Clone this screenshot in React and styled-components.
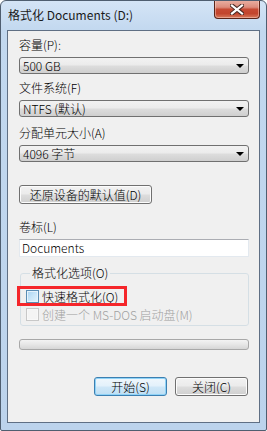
import styled, { createGlobalStyle } from "styled-components";

const GlobalStyle = createGlobalStyle`
	html, body {
		margin: 0;
		padding: 0;
		background: #ffffff;
	}
	body {
		font-family: "Noto Sans CJK SC", "Noto Sans", sans-serif;
		font-size: 12px;
		font-weight: 300;
		color: #000;
	}
`

const combos = [
	{ label: "容量(P):", value: "500 GB", gap: 7 },
	{ label: "文件系统(F)", value: "NTFS (默认)", gap: 7 },
	{ label: "分配单元大小(A)", value: "4096 字节", gap: 9 },
];

const CloseGlyph = () => (
	<svg width="14" height="11" viewBox="0 0 14 11">
		<path d="M2 1.5 L12 9.5 M12 1.5 L2 9.5" stroke="#4a2a24" strokeWidth="4.2" strokeLinecap="square" />
		<path d="M2 1.5 L12 9.5 M12 1.5 L2 9.5" stroke="#ffffff" strokeWidth="2.2" strokeLinecap="square" />
	</svg>
)

const App = () => {
	return (
		<>
			<GlobalStyle />
			<Window>
				<TitleBar>
					<Title>格式化 Documents (D:)</Title>
					<CloseButton><CloseGlyph /></CloseButton>
				</TitleBar>
				<Client>
					{combos.map((c) => (
						<Field key={c.label} $gap={c.gap}>
							<Label>{c.label}</Label>
							<Combo>
								<span>{c.value}</span>
								<Arrow />
							</Combo>
						</Field>
					))}

					<PushButton $width={133} $top={23}>还原设备的默认值(D)</PushButton>

					<Field $gap={16}>
						<Label>卷标(L)</Label>
						<TextInput>Documents</TextInput>
					</Field>

					<Group>
						<Legend>格式化选项(O)</Legend>
						<CheckRow>
							<CheckBox $hot />
							<span>快速格式化(Q)</span>
							<Highlight />
						</CheckRow>
						<CheckRow $disabled>
							<CheckBox $disabled />
							<span>创建一个 MS-DOS 启动盘(M)</span>
						</CheckRow>
					</Group>

					<Progress />

					<ButtonRow>
						<PushButton $width={73} $default>开始(S)</PushButton>
						<PushButton $width={73}>关闭(C)</PushButton>
					</ButtonRow>
				</Client>
			</Window>
		</>
	)
}

const Window = styled.div`
	width: 267px;
	height: 431px;
	box-sizing: border-box;
	display: flex;
	flex-direction: column;
	border: 1px solid #4f5e70;
	border-radius: 6px 6px 2px 2px;
	background: linear-gradient(180deg, #d4e4f6 0px, #c2d8ef 30px, #bcd3ec 100%);
	overflow: hidden;
`

const TitleBar = styled.div`
	height: 29px;
	display: flex;
	justify-content: space-between;
	align-items: flex-start;
	padding: 0 6px 0 7px;
	flex-shrink: 0;
`

const Title = styled.div`
	margin-top: 6px;
	font-size: 12px;
	font-weight: 400;
	line-height: 16px;
	color: #1a1a1a;
`

const CloseButton = styled.div`
	width: 46px;
	height: 19px;
	box-sizing: border-box;
	margin-top: -1px;
	display: flex;
	align-items: center;
	justify-content: center;
	border: 1px solid #5a2418;
	border-top: none;
	border-radius: 0 0 4px 4px;
	background: linear-gradient(180deg, #eab2a4 0%, #dc8c7c 40%, #c64a33 52%, #c2452d 75%, #d77a5c 100%);
	box-shadow: inset 0 0 0 1px rgba(255, 220, 210, 0.45);
`

const Client = styled.div`
	flex: 1;
	margin: 0 6px 7px 6px;
	border: 1px solid #5f6f84;
	background: #f0f0f0;
	padding: 0 10px 0 11px;
	display: flex;
	flex-direction: column;
`

const Field = styled.div`
	display: flex;
	flex-direction: column;
	margin-top: ${p => p.$gap}px;
`

const Label = styled.div`
	line-height: 14px;
	height: 14px;
	margin-bottom: 5px;
	white-space: nowrap;
`

const Combo = styled.div`
	height: 17px;
	box-sizing: border-box;
	border: 1px solid #707070;
	border-radius: 3px;
	background: linear-gradient(180deg, #f2f2f2 0%, #ebebeb 48%, #dddddd 52%, #cfcfcf 100%);
	display: flex;
	align-items: center;
	justify-content: space-between;
	padding: 0 4px 0 3px;
	line-height: 14px;
	white-space: nowrap;
`

const Arrow = styled.div`
	width: 0;
	height: 0;
	border-left: 4px solid transparent;
	border-right: 4px solid transparent;
	border-top: 4px solid #000;
	margin-top: 1px;
`

const PushButton = styled.div`
	width: ${p => p.$width}px;
	height: 19px;
	box-sizing: border-box;
	margin-top: ${p => p.$top || 0}px;
	border: 1px solid ${p => p.$default ? "#3c7fb1" : "#707070"};
	border-radius: 3px;
	background: ${p => p.$default
		? "linear-gradient(180deg, #f0f7fc 0%, #e3f1fb 48%, #cfe7f7 52%, #bfdff4 100%)"
		: "linear-gradient(180deg, #f2f2f2 0%, #ebebeb 48%, #dddddd 52%, #cfcfcf 100%)"};
	box-shadow: ${p => p.$default ? "inset 0 0 0 1px #8fd3f7" : "inset 0 0 0 1px #fcfcfc"};
	display: flex;
	align-items: center;
	justify-content: center;
	line-height: 14px;
	white-space: nowrap;
`

const TextInput = styled.div`
	height: 18px;
	box-sizing: border-box;
	background: #fff;
	border: 1px solid #e3e9ef;
	border-top-color: #abadb3;
	display: flex;
	align-items: center;
	padding-left: 2px;
	line-height: 14px;
`

const Group = styled.fieldset`
	margin: 9px 0 0 1px;
	padding: 0 0 2px 5px;
	border: 1px solid #d5dfe5;
	border-radius: 3px;
	min-width: 0;
`

const Legend = styled.legend`
	padding: 0 2px;
	margin-left: 4px;
	line-height: 14px;
`

const CheckRow = styled.div`
	position: relative;
	display: flex;
	align-items: center;
	gap: 3px;
	height: 18px;
	color: ${p => p.$disabled ? "#a0a0a0" : "#000"};
	white-space: nowrap;
	&:first-of-type {
		margin-top: 7px;
	}
`

const CheckBox = styled.div`
	width: 13px;
	height: 13px;
	box-sizing: border-box;
	flex-shrink: 0;
	border: 1px solid ${p => p.$disabled ? "#c8c8c8" : "#5b8db4"};
	background: ${p => p.$disabled
		? "#f4f4f4"
		: "linear-gradient(135deg, #a9d3f2 0%, #c8e5f8 50%, #e4f3fc 100%)"};
	box-shadow: inset 0 0 0 1px ${p => p.$disabled ? "#f8f8f8" : "#e6f3fc"};
`

const Highlight = styled.div`
	position: absolute;
	left: -9px;
	top: -1px;
	width: 110px;
	height: 20px;
	box-sizing: border-box;
	border: 3px solid #f5262b;
	pointer-events: none;
`

const Progress = styled.div`
	margin-top: 13px;
	height: 11px;
	box-sizing: border-box;
	border: 1px solid #a8a8a8;
	border-radius: 3px;
	background: linear-gradient(180deg, #f3f3f3 0%, #e6e6e6 50%, #d6d6d6 100%);
`

const ButtonRow = styled.div`
	display: flex;
	justify-content: flex-end;
	gap: 8px;
	margin-top: 27px;
	padding-right: 1px;
`

export default App;
